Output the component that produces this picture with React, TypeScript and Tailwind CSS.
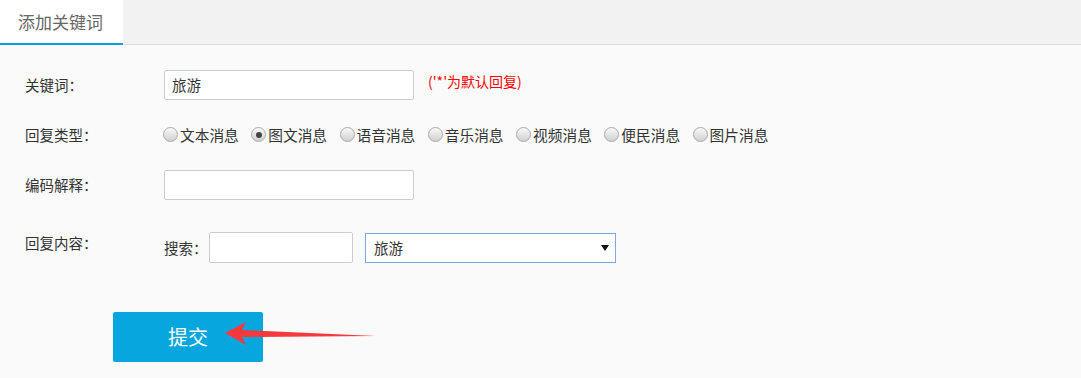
import React from 'react';

const font = { fontFamily: '"Noto Sans CJK SC", "Noto Sans", sans-serif' };

const Radio: React.FC<{ label: string; checked?: boolean }> = ({ label, checked }) => (
    <label className="flex items-center mr-[12.5px]">
        <span className="relative w-[15px] h-[15px] rounded-full border border-[#a9a9a9] bg-gradient-to-b from-[#fafafa] to-[#d0d0d0] flex items-center justify-center">
            {checked && <span className="w-[6px] h-[6px] rounded-full bg-[#444]" />}
        </span>
        <span className="ml-[2px] text-[14.7px] text-[#333]">{label}</span>
    </label>
);

const FormRow: React.FC<{ label: string; children: React.ReactNode; className?: string; labelClass?: string }> = ({ label, children, className = '', labelClass = 'items-center' }) => (
    <div className={`flex ${labelClass} ${className}`}>
        <div className="w-[139px] shrink-0 text-[14.5px] text-[#333]">{label}</div>
        {children}
    </div>
);

const App: React.FC = () => {
    const types = ['文本消息', '图文消息', '语音消息', '音乐消息', '视频消息', '便民消息', '图片消息'];

    return (
        <div className="relative min-h-screen bg-[#fafafa]" style={font}>
            <div className="flex h-[45px] bg-[#f2f2f2] border-b border-[#dcdcdc]">
                <div className="w-[123px] bg-white border-b-2 border-[#0aa1dc] -mb-px pl-[18px] flex items-center text-[17px] text-[#666]">
                    添加关键词
                </div>
            </div>

            <div className="pl-[25px]">
                <FormRow label="关键词：" className="mt-[25px] h-[30px]">
                    <div className="w-[250px] h-[30px] bg-white border border-[#ccc] rounded-[2px] flex items-center px-[7px] text-[14.5px] text-[#333]">
                        旅游
                    </div>
                    <span className="ml-[14px] -mt-[8px] text-[14px] text-[#ff0000]">('*'为默认回复)</span>
                </FormRow>

                <FormRow label="回复类型：" className="mt-[20px] h-[30px]">
                    <div className="flex items-center -ml-[1px]">
                        {types.map((t) => (
                            <Radio key={t} label={t} checked={t === '图文消息'} />
                        ))}
                    </div>
                </FormRow>

                <FormRow label="编码解释：" className="mt-[20px] h-[30px]">
                    <div className="w-[250px] h-[30px] bg-white border border-[#ccc] rounded-[2px]" />
                </FormRow>

                <FormRow label="回复内容：" className="mt-[32px]" labelClass="items-start">
                    <div className="flex items-center">
                        <span className="w-[45px] text-[14.5px] text-[#333] mt-[1px]">搜索：</span>
                        <div className="w-[144px] h-[31px] bg-white border border-[#ccc] rounded-[2px]" />
                        <div className="ml-[12px] w-[251px] h-[30px] bg-white border border-[#7fa7e6] flex items-center justify-between pl-[8px] pr-[6px] text-[14.5px] text-[#333]">
                            旅游
                            <svg width="8" height="6" viewBox="0 0 8 6">
                                <polygon points="0,0 8,0 4,6" fill="#111" />
                            </svg>
                        </div>
                    </div>
                </FormRow>

                <div className="mt-[49px] ml-[88px]">
                    <button className="w-[150px] h-[50px] bg-[#08a6de] rounded-[2px] text-white text-[20px]">
                        提交
                    </button>
                </div>
            </div>

            <svg className="absolute left-[220px] top-[318px]" width="160" height="30" viewBox="0 0 160 30">
                <polygon points="5,15 26,4 22,12 156,18 22,19 26,27" fill="#f5393c" />
            </svg>
        </div>
    );
};

export default App;
